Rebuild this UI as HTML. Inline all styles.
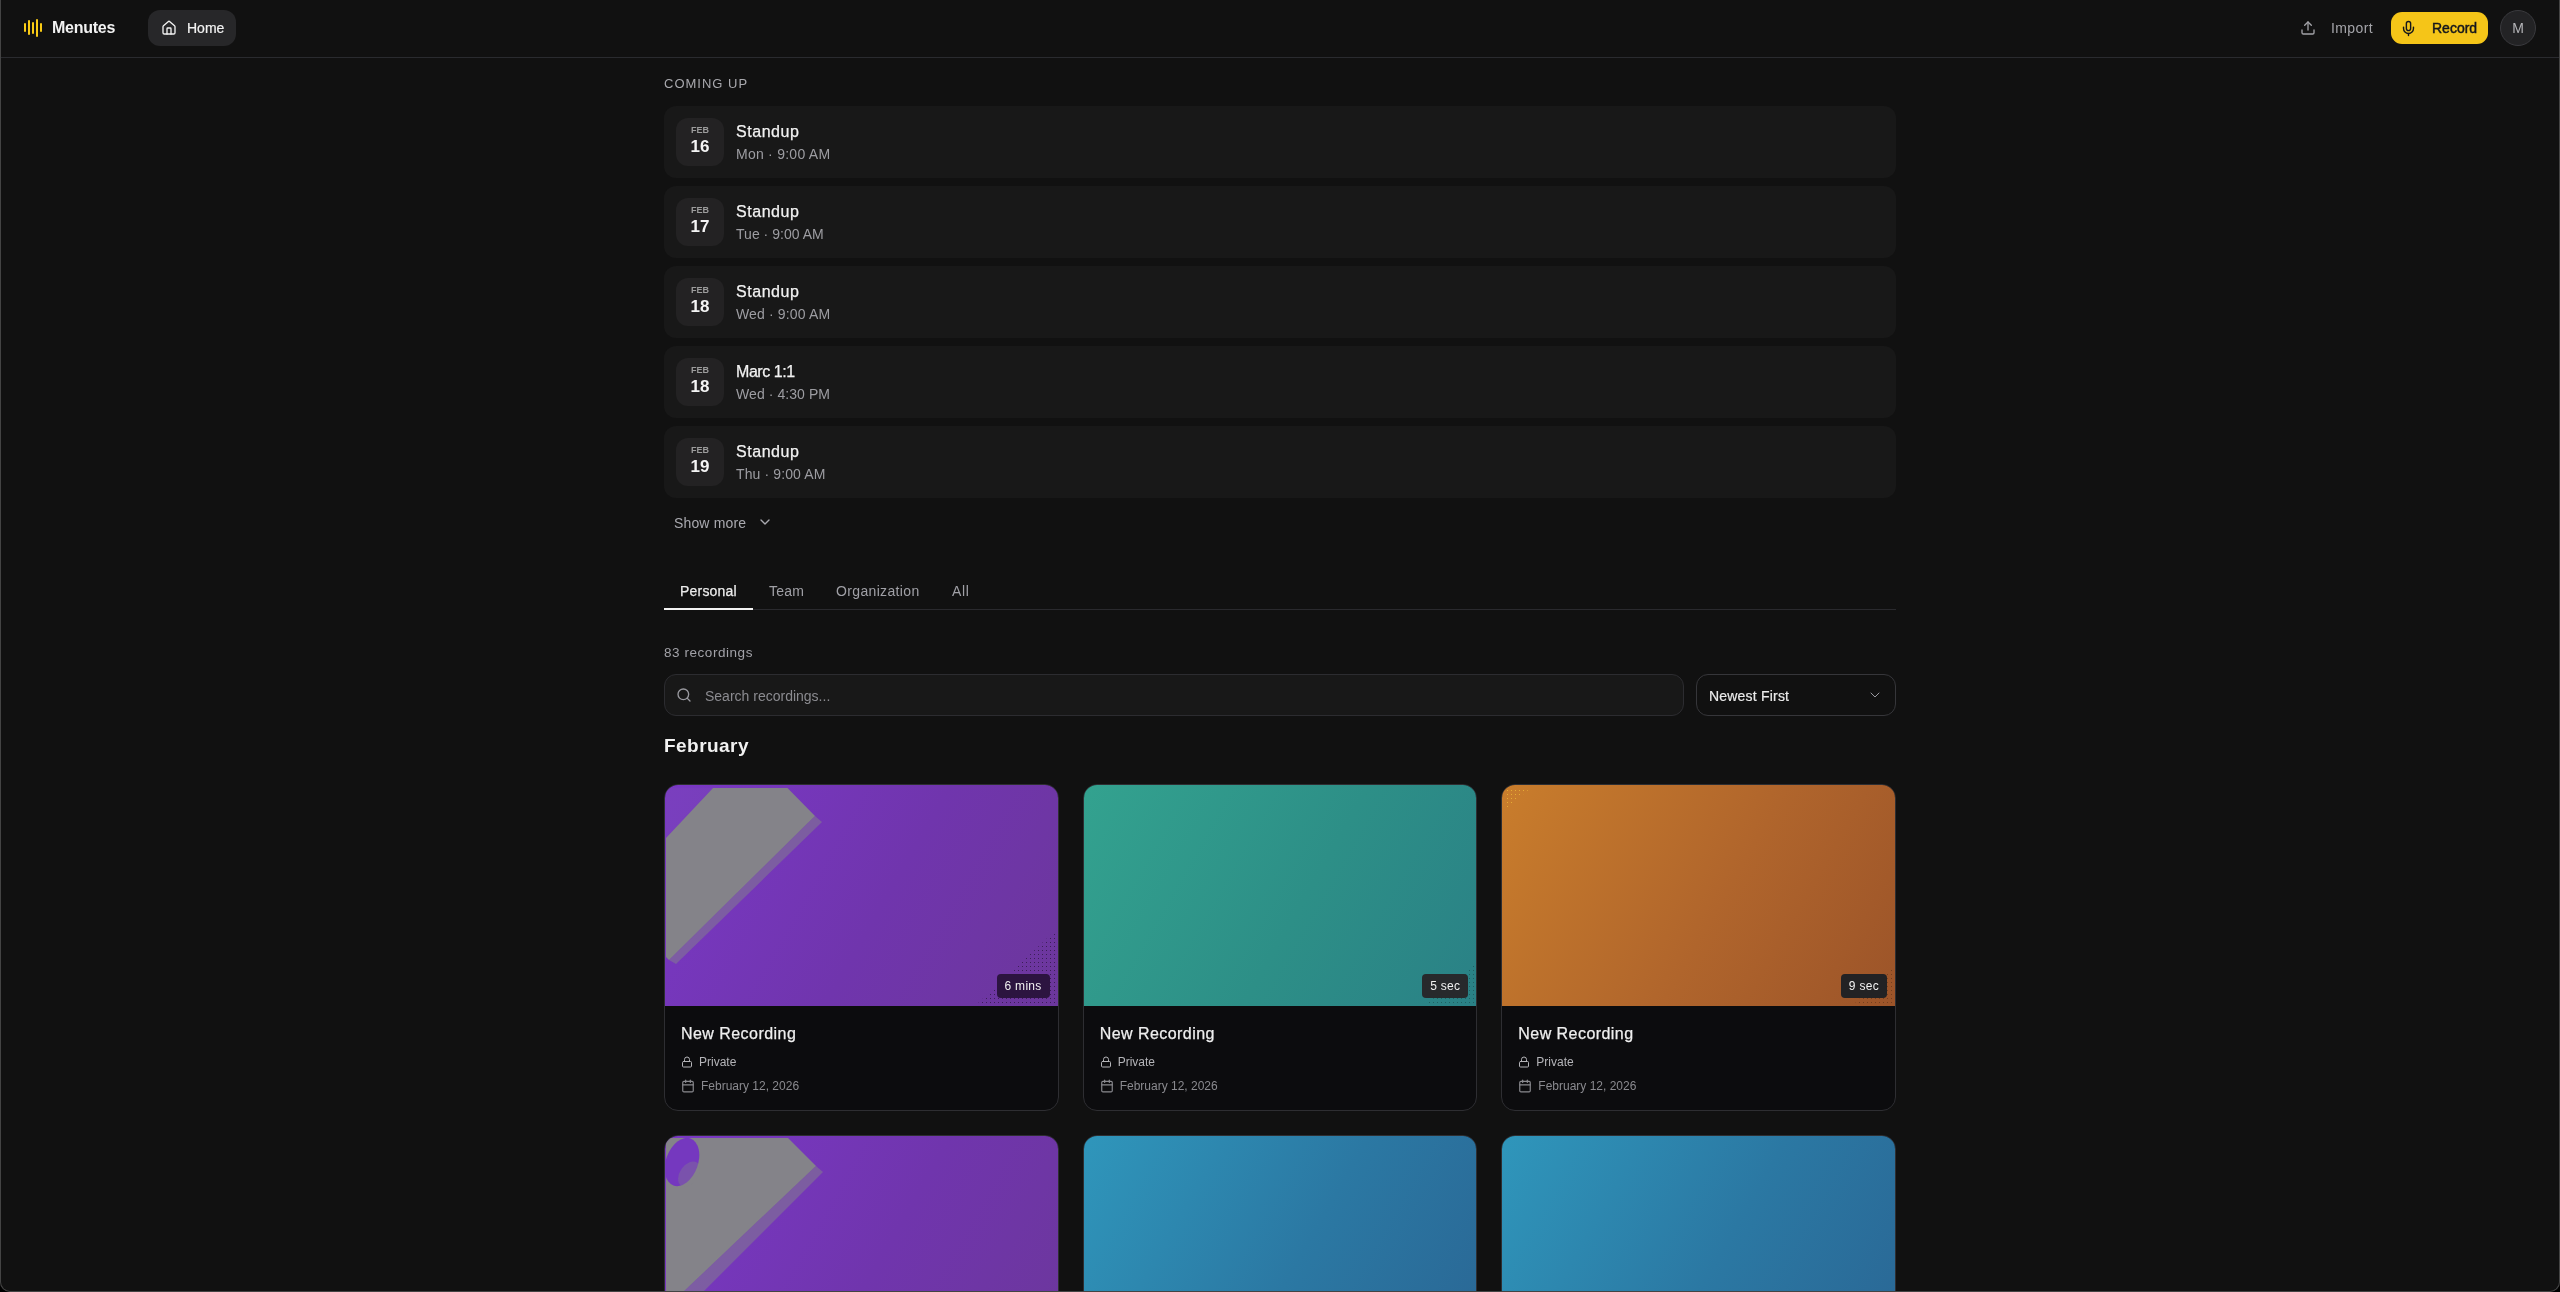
<!DOCTYPE html>
<html>
<head>
<meta charset="utf-8">
<style>
*{box-sizing:border-box;margin:0;padding:0}
html,body{width:2560px;height:1292px;overflow:hidden;background:#000}
body{font-family:"Liberation Sans",sans-serif;color:#ededed;position:relative}
.win{position:absolute;left:0;top:0;width:2560px;height:1292px;background:#111111;border-radius:0 0 10px 10px;overflow:hidden;will-change:transform}
.frame{position:absolute;left:0;top:0;width:2560px;height:1292px;border:1px solid #444;border-top:none;border-radius:0 0 10px 10px;pointer-events:none}
.abs{position:absolute;white-space:nowrap}
/* header */
.hdr{position:absolute;left:0;top:0;width:2560px;height:58px;border-bottom:1px solid #2a2b2f;background:#111}
.logo span{position:absolute;width:2px;background:#f9cb15;border-radius:1px}
.home{position:absolute;left:148px;top:10px;width:88px;height:36px;border-radius:12px;background:#272729}
.rec{position:absolute;left:2391px;top:12px;width:97px;height:32px;border-radius:11px;background:#f5c518}
.avatar{position:absolute;left:2500px;top:10px;width:36px;height:36px;border-radius:50%;background:#232325;border:1px solid #3a3a3e}
/* events */
.ev{position:absolute;left:664px;width:1232px;height:72px;border-radius:12px;background:#181818}
.ev .date{position:absolute;left:12px;top:12px;width:48px;height:48px;border-radius:12px;background:#232223;text-align:center}
.ev .mon{position:absolute;left:0;width:48px;top:7px;font-size:9px;line-height:10px;font-weight:700;color:#9c9c9c}
.ev .day{position:absolute;left:0;width:48px;top:19px;font-size:17px;line-height:20px;font-weight:700;color:#f4f4f4}
.med{-webkit-text-stroke:0.25px currentColor}
.ev .t{-webkit-text-stroke:0.25px currentColor;position:absolute;left:72px;top:16px;font-size:16px;line-height:20px;color:#f2f2f2;letter-spacing:0.55px}
.ev .s{position:absolute;left:72px;top:39px;font-size:14px;line-height:18px;color:#9d9da2;letter-spacing:0.25px}
/* tabs */
.tab{position:absolute;top:581px;font-size:14px;line-height:20px;color:#a0a0a6;letter-spacing:0.2px}
/* cards */
.card{position:absolute;width:394.67px;height:327px;border-radius:14px;border:1px solid #2e2e32;background:#0c0c0e;overflow:hidden}
.thumb{position:absolute;left:0;top:0;width:100%;height:221px}
.badge{position:absolute;right:8px;top:189px;height:24px;padding:0 8px;border-radius:4px;font-size:12px;line-height:24px;color:#f0f0f0;letter-spacing:0.3px}
.ctitle{-webkit-text-stroke:0.25px currentColor;position:absolute;left:16px;top:239px;font-size:16px;line-height:20px;color:#efefef;letter-spacing:0.45px}
.meta{position:absolute;left:16px;font-size:12px;line-height:16px}
</style>
</head>
<body>
<svg width="0" height="0" style="position:absolute"><defs>
<pattern id="dk" width="4" height="4" patternUnits="userSpaceOnUse"><rect x="1" y="1" width="1" height="1" fill="#000" fill-opacity="0.45"/></pattern>
<pattern id="yl" width="4" height="4" patternUnits="userSpaceOnUse"><rect x="1" y="1" width="1" height="1" fill="#ffd23c" fill-opacity="0.8"/></pattern>
</defs></svg>
<div class="win">
  <div class="hdr">
    <div class="logo">
      <span style="left:24px;top:23px;height:9px"></span>
      <span style="left:28px;top:20px;height:15px"></span>
      <span style="left:32px;top:22px;height:12px"></span>
      <span style="left:36px;top:19px;height:18px"></span>
      <span style="left:40px;top:23px;height:9px"></span>
    </div>
    <div class="abs" style="left:52px;top:18px;font-size:16px;line-height:20px;font-weight:700;color:#f2f2f2;letter-spacing:-0.25px">Menutes</div>
    <div class="home">
      <svg style="position:absolute;left:13px;top:10px" width="16" height="16" viewBox="0 0 24 24" fill="none" stroke="#f2f2f2" stroke-width="2" stroke-linecap="round" stroke-linejoin="round"><path d="M15 21v-8a1 1 0 0 0-1-1h-4a1 1 0 0 0-1 1v8"/><path d="M3 10a2 2 0 0 1 .709-1.528l7-5.999a2 2 0 0 1 2.582 0l7 5.999A2 2 0 0 1 21 10v9a2 2 0 0 1-2 2H5a2 2 0 0 1-2-2z"/></svg>
      <div class="abs" style="left:39px;top:8px;font-size:14px;line-height:20px;color:#f2f2f2;-webkit-text-stroke:0.2px currentColor">Home</div>
    </div>
    <svg style="position:absolute;left:2300px;top:20px" width="16" height="16" viewBox="0 0 24 24" fill="none" stroke="#a3a3a8" stroke-width="2" stroke-linecap="round" stroke-linejoin="round"><path d="M21 15v4a2 2 0 0 1-2 2H5a2 2 0 0 1-2-2v-4"/><polyline points="17 8 12 3 7 8"/><line x1="12" x2="12" y1="3" y2="15"/></svg>
    <div class="abs" style="left:2331px;top:18px;font-size:14px;line-height:20px;color:#a5a5aa;letter-spacing:0.4px">Import</div>
    <div class="rec">
      <svg style="position:absolute;left:9px;top:7.5px" width="17" height="17" viewBox="0 0 24 24" fill="none" stroke="#14161c" stroke-width="2" stroke-linecap="round" stroke-linejoin="round"><path d="M12 2a3 3 0 0 0-3 3v7a3 3 0 0 0 6 0V5a3 3 0 0 0-3-3Z"/><path d="M19 10v2a7 7 0 0 1-14 0v-2"/><line x1="12" x2="12" y1="19" y2="22"/></svg>
      <div class="abs" style="left:41px;top:6px;font-size:14px;line-height:20px;color:#14161c;-webkit-text-stroke:0.45px #14161c">Record</div>
    </div>
    <div class="avatar"><div class="abs" style="left:0;width:34px;text-align:center;top:7px;font-size:14px;line-height:20px;color:#b4b4b8">M</div></div>
  </div>

  <div class="abs" style="left:664px;top:75px;font-size:13px;line-height:18px;color:#a9a9ae;letter-spacing:1px">COMING UP</div>

  <div class="ev" style="top:106px"><div class="date"><div class="mon">FEB</div><div class="day">16</div></div><div class="t">Standup</div><div class="s">Mon · 9:00 AM</div></div>
  <div class="ev" style="top:186px"><div class="date"><div class="mon">FEB</div><div class="day">17</div></div><div class="t">Standup</div><div class="s" style="letter-spacing:0.03px">Tue · 9:00 AM</div></div>
  <div class="ev" style="top:266px"><div class="date"><div class="mon">FEB</div><div class="day">18</div></div><div class="t">Standup</div><div class="s" style="letter-spacing:0.15px">Wed · 9:00 AM</div></div>
  <div class="ev" style="top:346px"><div class="date"><div class="mon">FEB</div><div class="day">18</div></div><div class="t" style="letter-spacing:-0.45px">Marc 1:1</div><div class="s" style="letter-spacing:0.07px">Wed · 4:30 PM</div></div>
  <div class="ev" style="top:426px"><div class="date"><div class="mon">FEB</div><div class="day">19</div></div><div class="t">Standup</div><div class="s" style="letter-spacing:0.12px">Thu · 9:00 AM</div></div>

  <div class="abs" style="left:674px;top:513px;font-size:14px;line-height:20px;color:#aaaab0;letter-spacing:0.15px">Show more</div>
  <svg style="position:absolute;left:757px;top:514px" width="16" height="16" viewBox="0 0 24 24" fill="none" stroke="#aaaab0" stroke-width="2" stroke-linecap="round" stroke-linejoin="round"><path d="m6 9 6 6 6-6"/></svg>

  <!-- tabs -->
  <div style="position:absolute;left:664px;top:609px;width:1232px;height:1px;background:#2a2a2e"></div>
  <div style="position:absolute;left:664px;top:608px;width:89px;height:2px;background:#f2f2f2"></div>
  <div class="tab med" style="left:680px;color:#ececec">Personal</div>
  <div class="tab" style="left:769px">Team</div>
  <div class="tab" style="left:836px;letter-spacing:0.35px">Organization</div>
  <div class="tab" style="left:952px;letter-spacing:0.6px">All</div>

  <div class="abs" style="left:664px;top:644px;font-size:13.5px;line-height:18px;color:#a2a2a8;letter-spacing:0.55px">83 recordings</div>

  <div style="position:absolute;left:664px;top:674px;width:1020px;height:42px;border-radius:12px;background:#181818;border:1px solid #2c2c30">
    <svg style="position:absolute;left:11px;top:12px" width="16" height="16" viewBox="0 0 24 24" fill="none" stroke="#9a9aa0" stroke-width="2" stroke-linecap="round" stroke-linejoin="round"><circle cx="11" cy="11" r="8"/><path d="m21 21-4.3-4.3"/></svg>
    <div class="abs" style="left:40px;top:11px;font-size:14px;line-height:20px;color:#8b8b90">Search recordings...</div>
  </div>
  <div style="position:absolute;left:1696px;top:674px;width:200px;height:42px;border-radius:12px;border:1px solid #36363a">
    <div class="abs" style="left:12px;top:11px;font-size:14px;line-height:20px;color:#ebebeb;letter-spacing:0.2px;-webkit-text-stroke:0.2px currentColor">Newest First</div>
    <svg style="position:absolute;left:170px;top:12px" width="16" height="16" viewBox="0 0 24 24" fill="none" stroke="#9a9aa0" stroke-width="1.5" stroke-linecap="round" stroke-linejoin="round"><path d="m6 9 6 6 6-6"/></svg>
  </div>

  <div class="abs" style="left:664px;top:734px;font-size:19px;line-height:24px;font-weight:700;color:#f2f2f2;letter-spacing:0.45px">February</div>

  <!-- cards row 1 -->
  <div class="card" style="left:664px;top:784px">
    <div class="thumb" style="background:linear-gradient(120deg,#7a38c6 0%,#7035ad 55%,#6c379c 100%)"><svg style="position:absolute;left:0;top:0" width="393" height="221" viewBox="0 0 393 221"><polygon points="1,53 1,3 48,3" fill="#848389" opacity="0.1"/><polygon points="48,3 122.5,3 150,31 4,175 1,172 1,53" fill="#848389"/><polygon points="150,31 157,37 11,179 4,175" fill="#848389" opacity="0.5"/></svg></div>
    <svg style="position:absolute;left:0;top:0" width="393" height="221"><polygon points="393,143 393,221 310,221" fill="url(#dk)"/></svg><div class="badge" style="background:#2c1440">6 mins</div>
    <div class="ctitle">New Recording</div>
    <svg style="position:absolute;left:16px;top:271px" width="12" height="12" viewBox="0 0 24 24" fill="none" stroke="#b4b4b8" stroke-width="2" stroke-linecap="round" stroke-linejoin="round"><rect width="18" height="11" x="3" y="11" rx="2" ry="2"/><path d="M7 11V7a5 5 0 0 1 10 0v4"/></svg><div class="meta" style="left:34px;top:269px;color:#b4b4b8">Private</div>
    <svg style="position:absolute;left:16px;top:294px" width="14" height="14" viewBox="0 0 24 24" fill="none" stroke="#8a8a8f" stroke-width="2" stroke-linecap="round" stroke-linejoin="round"><path d="M8 2v4"/><path d="M16 2v4"/><rect width="18" height="18" x="3" y="4" rx="2"/><path d="M3 10h18"/></svg><div class="meta" style="left:36px;top:293px;color:#8a8a8f">February 12, 2026</div>
  </div>
  <div class="card" style="left:1082.67px;top:784px">
    <div class="thumb" style="background:linear-gradient(120deg,#33a28f 0%,#2d8f87 55%,#2a8186 100%)"></div>
    <svg style="position:absolute;left:0;top:0" width="393" height="221"><polygon points="393,178 393,221 340,221" fill="url(#dk)" opacity="0.6"/></svg><div class="badge" style="background:#27292c">5 sec</div>
    <div class="ctitle">New Recording</div>
    <svg style="position:absolute;left:16px;top:271px" width="12" height="12" viewBox="0 0 24 24" fill="none" stroke="#b4b4b8" stroke-width="2" stroke-linecap="round" stroke-linejoin="round"><rect width="18" height="11" x="3" y="11" rx="2" ry="2"/><path d="M7 11V7a5 5 0 0 1 10 0v4"/></svg><div class="meta" style="left:34px;top:269px;color:#b4b4b8">Private</div>
    <svg style="position:absolute;left:16px;top:294px" width="14" height="14" viewBox="0 0 24 24" fill="none" stroke="#8a8a8f" stroke-width="2" stroke-linecap="round" stroke-linejoin="round"><path d="M8 2v4"/><path d="M16 2v4"/><rect width="18" height="18" x="3" y="4" rx="2"/><path d="M3 10h18"/></svg><div class="meta" style="left:36px;top:293px;color:#8a8a8f">February 12, 2026</div>
  </div>
  <div class="card" style="left:1501.33px;top:784px">
    <div class="thumb" style="background:linear-gradient(120deg,#c97d2c 0%,#b0652c 55%,#9c5429 100%)"></div>
    <svg style="position:absolute;left:0;top:0" width="393" height="221"><polygon points="2,2 30,2 2,25" fill="url(#yl)" opacity="0.7"/><polygon points="393,180 393,221 350,221" fill="url(#dk)" opacity="0.6"/></svg><div class="badge" style="background:#222224">9 sec</div>
    <div class="ctitle">New Recording</div>
    <svg style="position:absolute;left:16px;top:271px" width="12" height="12" viewBox="0 0 24 24" fill="none" stroke="#b4b4b8" stroke-width="2" stroke-linecap="round" stroke-linejoin="round"><rect width="18" height="11" x="3" y="11" rx="2" ry="2"/><path d="M7 11V7a5 5 0 0 1 10 0v4"/></svg><div class="meta" style="left:34px;top:269px;color:#b4b4b8">Private</div>
    <svg style="position:absolute;left:16px;top:294px" width="14" height="14" viewBox="0 0 24 24" fill="none" stroke="#8a8a8f" stroke-width="2" stroke-linecap="round" stroke-linejoin="round"><path d="M8 2v4"/><path d="M16 2v4"/><rect width="18" height="18" x="3" y="4" rx="2"/><path d="M3 10h18"/></svg><div class="meta" style="left:36px;top:293px;color:#8a8a8f">February 12, 2026</div>
  </div>
  <!-- cards row 2 -->
  <div class="card" style="left:664px;top:1135px">
    <div class="thumb" style="background:linear-gradient(120deg,#7a38c6 0%,#7035ad 55%,#6c379c 100%)"><svg style="position:absolute;left:0;top:0" width="393" height="221" viewBox="0 0 393 221"><polygon points="1,2 123,2 151,30 14,160 1,160" fill="#848389"/><polygon points="151,30 158,36 34,160 14,160" fill="#848389" opacity="0.5"/><ellipse cx="17" cy="26" rx="16" ry="25" transform="rotate(20 17 26)" fill="#7538bf"/><ellipse cx="24" cy="38" rx="9" ry="14" transform="rotate(35 24 38)" fill="#848389" opacity="0.35"/></svg></div>
  </div>
  <div class="card" style="left:1082.67px;top:1135px">
    <div class="thumb" style="background:linear-gradient(120deg,#2f96bb 0%,#2b78a3 55%,#2a6795 100%)"></div>
  </div>
  <div class="card" style="left:1501.33px;top:1135px">
    <div class="thumb" style="background:linear-gradient(120deg,#2f96bb 0%,#2b78a3 55%,#2a6795 100%)"></div>
  </div>
</div>
<div class="frame"></div>
</body>
</html>
